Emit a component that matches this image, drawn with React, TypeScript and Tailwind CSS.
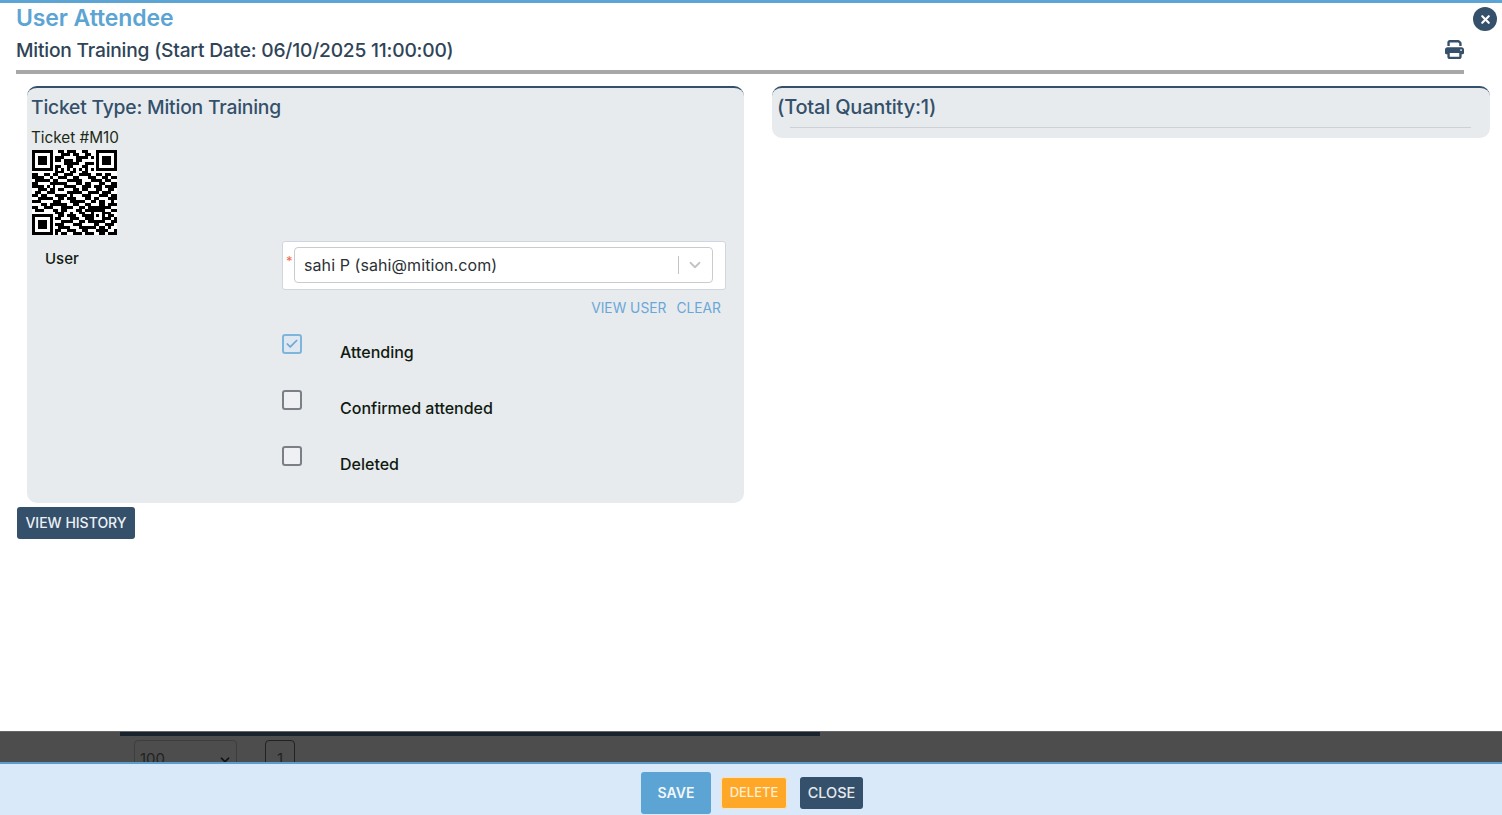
import { Check, ChevronDown, X } from "lucide-react";
import { FaPrint } from "react-icons/fa6";

const QR_ROWS = [
  "11111110011011100110001111111",
  "10000010001110110011001000001",
  "10111010111000011110101011101",
  "10111010110111011000001011101",
  "10111010000111110011101011101",
  "10000010110011000110001000001",
  "11111110101010101010101111111",
  "00000000111001100110000000000",
  "11001101100111001111001101100",
  "11110010011100110001110011011",
  "01111101100011111000111101100",
  "11000011111100011011000110011",
  "11110101000111100111011101111",
  "00111011011000110110001100110",
  "01100111000011111001111011100",
  "11011000111101000111000111011",
  "00111110011011100011011000111",
  "11100001110001111100110110010",
  "00011011111100110011000110111",
  "11001110001111001101111111100",
  "01110001101100011011111110011",
  "00000000111001001100100011100",
  "11111110011011100111101010110",
  "10000010110001110011100011101",
  "10111010001111001101111110011",
  "10111010111000111000011001110",
  "10111010011110001111110110100",
  "10000010110011100110001111001",
  "11111110101100111011100110111",
];

function QrCode() {
  return (
    <svg width="85" height="85" viewBox="0 0 29 29" shapeRendering="crispEdges" className="block bg-white">
      {QR_ROWS.map((row, y) =>
        row.split("").map((cell, x) =>
          cell === "1" ? <rect key={`${x}-${y}`} x={x} y={y} width="1" height="1" fill="#000" /> : null
        )
      )}
    </svg>
  );
}

function CheckRow({ label, checked }: { label: string; checked?: boolean }) {
  return (
    <div className="flex h-[56px] items-start">
      <div
        className={`mt-[1px] flex h-[20px] w-[20px] items-center justify-center rounded-[3px] border-2 ${
          checked ? "border-[#7db5dc] bg-[#dfe8f0]" : "border-[#7a8085] bg-[#eef0f3]"
        }`}
      >
        {checked && <Check size={14} strokeWidth={3} className="text-[#6fa9d3]" />}
      </div>
      <span className="ml-[38px] mt-[9px] text-[16px] font-medium leading-[20px] text-[#111a10]">{label}</span>
    </div>
  );
}

export default function App() {
  return (
    <div className="flex h-[815px] w-[1502px] flex-col overflow-hidden bg-white font-['Inter',sans-serif]">
      {/* modal body */}
      <div className="relative h-[731px] shrink-0 border-t-[3px] border-[#5ba4d3] bg-white">
        <div className="pl-4 pr-[38px]">
          <h1 className="h-[31px] text-[23px] font-semibold leading-[31px] tracking-[-0.1px] text-[#5ba4d3]">User Attendee</h1>
          <div className="flex h-[40px] items-center justify-between border-b-[4px] border-[#a8a8a8] pb-[4px]">
            <h2 className="text-[19.2px] font-medium leading-[28px] tracking-[-0.2px] text-[#2f4457]">
              Mition Training (Start Date: 06/10/2025 11:00:00)
            </h2>
            <FaPrint size={19} className="mb-[2px] text-[#34506a]" />
          </div>
        </div>

        <button className="absolute right-[5px] top-[4px] flex h-[24px] w-[24px] items-center justify-center rounded-full bg-[#34506a]">
          <X size={13} strokeWidth={4} className="text-white" />
        </button>

        <div className="mt-[12px] flex items-start pl-[27px] pr-[12px]">
          <section className="h-[417px] w-[717px] rounded-[10px] border-t-2 border-[#34506a] bg-[#e7ebee] pl-1">
            <h3 className="mt-[5px] text-[19.3px] font-medium leading-[28px] tracking-[-0.2px] text-[#34506a]">
              Ticket Type: Mition Training
            </h3>
            <p className="mt-[7px] text-[15.3px] leading-[20px] text-[#1c2a16]">Ticket #M10</p>
            <div className="mt-[2px] pl-[1px]">
              <QrCode />
            </div>
            <div className="mt-[6px] flex">
              <label className="ml-[14px] mt-[8px] w-[237px] text-[15px] font-medium leading-[20px] text-[#111a10]">User</label>
              <div className="w-[444px]">
                <div className="flex h-[49px] items-center rounded-[3px] border border-[#cfd6df] bg-white pl-[3px] pr-3">
                  <span className="mb-[9px] w-[8px] text-[13px] leading-none text-[#f0694f]">*</span>
                  <div className="mt-[-1px] flex h-[36px] flex-1 items-center rounded-[4px] border border-[#c8ccd0] bg-white pl-[9px]">
                    <span className="mb-[1px] flex-1 text-[16px] leading-[24px] tracking-[0.08px] text-[#2b3036]">sahi P (sahi@mition.com)</span>
                    <span className="h-[18px] w-px bg-[#c4c4c4]" />
                    <ChevronDown size={18} strokeWidth={2.5} className="ml-[7px] mr-[8px] text-[#c4c4c4]" />
                  </div>
                </div>
                <div className="mt-[8px] flex h-[20px] justify-end gap-[10px] pr-[5px] text-[13.8px] leading-[20px] text-[#6ba7d6]">
                  <a>VIEW USER</a>
                  <a>CLEAR</a>
                </div>
                <div className="mt-[15px]">
                  <CheckRow label="Attending" checked />
                  <CheckRow label="Confirmed attended" />
                  <CheckRow label="Deleted" />
                </div>
              </div>
            </div>
          </section>
          <section className="ml-[28px] h-[52px] w-[718px] rounded-[10px] border-t-2 border-[#34506a] bg-[#e7ebee] pl-[5px]">
            <h3 className="mt-[5px] text-[20px] font-medium leading-[28px] tracking-[-0.2px] text-[#34506a]">(Total Quantity:1)</h3>
            <div className="ml-[13px] mr-[19px] mt-[6px] h-px bg-[#cdd1d6]" />
          </section>
        </div>

        <button className="ml-[17px] mt-[4px] h-[32px] w-[118px] rounded-[3px] bg-[#34506a] pb-[1px] text-[14px] font-medium text-[#edf1f5]">
          VIEW HISTORY
        </button>
      </div>

      {/* page behind the overlay */}
      <div className="relative h-[31px] shrink-0 overflow-hidden border-t border-[#666] bg-[#4d4d4d]">
        <div className="ml-[120px] h-[4px] w-[700px] bg-[#18232d]" />
        <div className="ml-[134px] mt-[4px] flex">
          <div className="flex h-[36px] w-[103px] justify-between rounded-[4px] border border-[#3d3d3d] pl-[5px] pr-[4px] pt-[8px] text-[15px] leading-[20px] text-[#222]">
            100
            <ChevronDown size={14} strokeWidth={3} className="mt-[4px] text-[#111]" />
          </div>
          <div className="ml-[28px] h-[36px] w-[30px] rounded-[4px] border border-[#222] pt-[8px] text-center text-[15px] leading-[20px] text-[#222]">
            1
          </div>
        </div>
      </div>

      {/* footer */}
      <div className="flex flex-1 items-start justify-center border-t-2 border-[#5a9ccb] bg-[#d9e9f9] pl-[2px]">
        <button className="mt-[8px] h-[42px] w-[70px] rounded-[3px] bg-[#5ba4d3] pb-[1px] text-[14px] font-semibold text-[#f2f7fb]">SAVE</button>
        <button className="ml-[10px] mt-[13px] h-[32px] w-[66px] rounded-[3px] border border-[#fbe3b8] bg-[#ffa726] text-[13px] font-medium text-[#fdeed6]">
          DELETE
        </button>
        <button className="ml-[13px] mt-[13px] h-[32px] w-[63px] rounded-[3px] bg-[#34506a] text-[14.5px] font-medium text-[#e5e9ed]">CLOSE</button>
      </div>
    </div>
  );
}
